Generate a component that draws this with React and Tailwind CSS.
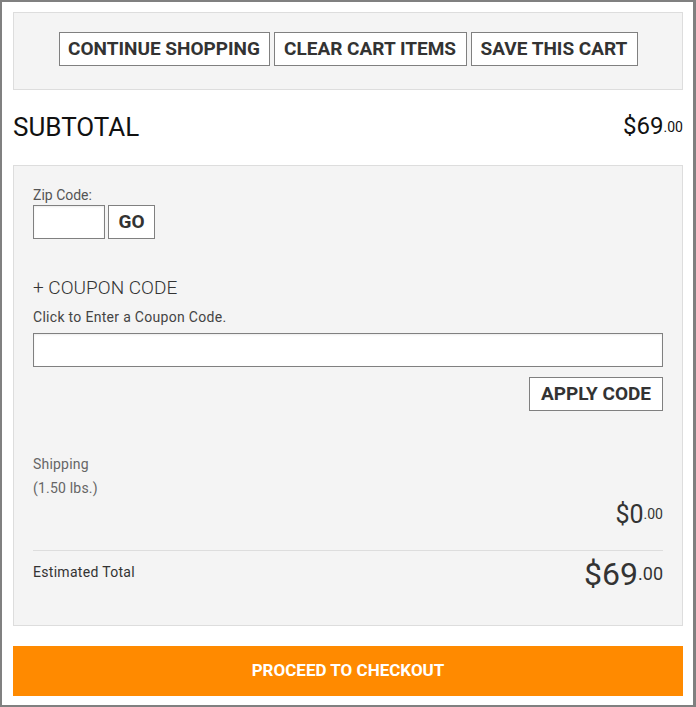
import React from 'react';

function Price({ whole, cents, size, centsSize, centsOffset, color }) {
  return (
    <div className={`flex items-start ${color}`}>
      <span className={`${size} leading-none`}>{whole}</span>
      <span className={`${centsSize} leading-none ${centsOffset}`}>{cents}</span>
    </div>
  );
}

export default function App() {
  return (
    <div className="w-[696px] h-[707px] bg-white border-2 border-r-[3px] border-[#808080] pt-[10px] pl-[11px] pr-[10px] font-['Roboto',sans-serif]">
      {/* Cart actions */}
      <div className="flex justify-center gap-1 bg-[#f4f4f4] border border-[#dddddd] pt-[19px] pb-[23px]">
        <button className="w-[211px] h-[34px] bg-white border border-[#808080] text-[19px] font-bold text-[#333]">
          CONTINUE SHOPPING
        </button>
        <button className="w-[193px] h-[34px] bg-white border border-[#808080] text-[19px] font-bold text-[#333]">
          CLEAR CART ITEMS
        </button>
        <button className="w-[167px] h-[34px] bg-white border border-[#808080] text-[19px] font-bold text-[#333]">
          SAVE THIS CART
        </button>
      </div>

      {/* Subtotal */}
      <div className="flex justify-between items-start mt-[24px]">
        <h2 className="text-[26px] leading-none text-[#111]">SUBTOTAL</h2>
        <Price whole="$69" cents=".00" size="text-[24px]" centsSize="text-[14px]" centsOffset="mt-[6px]" color="text-[#111]" />
      </div>

      {/* Summary panel */}
      <div className="mt-[25px] bg-[#f4f4f4] border border-[#dddddd] px-[19px] pt-[19px] pb-[35px]">
        <label className="block text-[14px] leading-[20px] text-[#555]">Zip Code:</label>
        <div className="flex gap-[3px]">
          <input className="w-[72px] h-[34px] bg-white border border-[#808080] shadow-[inset_0_1px_2px_rgba(0,0,0,0.08)] outline-none" />
          <button className="w-[47px] h-[34px] bg-white border border-[#808080] text-[19px] font-bold text-[#333]">GO</button>
        </div>

        <div className="mt-[37px] text-[19px] leading-[24px] font-light text-[#333]">+ COUPON CODE</div>
        <p className="mt-[7px] text-[14px] leading-[20px] tracking-[0.3px] text-[#444]">Click to Enter a Coupon Code.</p>
        <input className="mt-[6px] block w-full h-[34px] bg-white border border-[#808080] shadow-[inset_0_1px_2px_rgba(0,0,0,0.08)] outline-none" />
        <div className="flex justify-end mt-[10px]">
          <button className="w-[134px] h-[34px] bg-white border border-[#808080] text-[19px] font-bold text-[#333]">APPLY CODE</button>
        </div>

        <div className="mt-[41px] text-[14px] leading-[24px] tracking-[0.2px] text-[#666]">
          <div>Shipping</div>
          <div>(1.50 lbs.)</div>
        </div>
        <div className="flex justify-end mt-[2px]">
          <Price whole="$0" cents=".00" size="text-[25px]" centsSize="text-[14px]" centsOffset="mt-[5px]" color="text-[#333]" />
        </div>

        <div className="mt-[23px] border-t border-[#dddddd] pt-[7px] flex justify-between items-start">
          <span className="mt-[4px] text-[14px] leading-[20px] tracking-[0.3px] text-[#333]">Estimated Total</span>
          <Price whole="$69" cents=".00" size="text-[32px]" centsSize="text-[18px]" centsOffset="mt-[7px]" color="text-[#333]" />
        </div>
      </div>

      {/* Checkout */}
      <button className="mt-[20px] w-full h-[50px] bg-[#ff8a00] text-white text-[17px] font-bold">
        PROCEED TO CHECKOUT
      </button>
    </div>
  );
}
